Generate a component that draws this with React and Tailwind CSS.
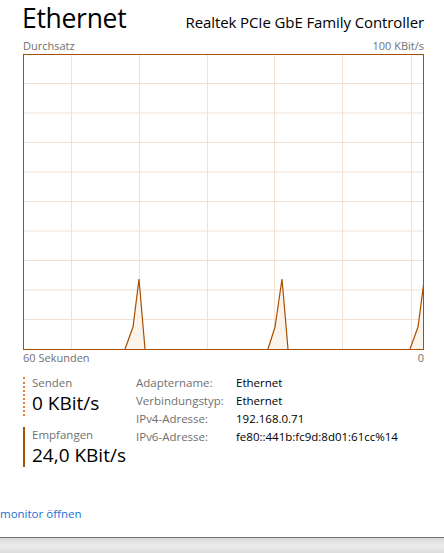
import React from 'react';

const vLines = [48, 116, 184, 251, 319, 388];
const hLines = [29.5, 59, 88.5, 118, 147.5, 177, 206.5, 236, 265.5];

const peaks = [
  '102,295 110,273 116,225 122,295',
  '245,295 252,273 259,225 265,295',
  '387,295 395,273 401,227 401,295',
];

function ThroughputChart() {
  return (
    <svg width="401" height="296" viewBox="0 0 401 296" className="block">
      <rect x="0" y="0" width="401" height="296" fill="#ffffff" />
      {vLines.map(x => (
        <line key={x} x1={x + 0.5} y1="0" x2={x + 0.5} y2="296" stroke="#f1e2d4" strokeWidth="1" />
      ))}
      {hLines.map(y => (
        <line key={y} x1="0" y1={y} x2="401" y2={y} stroke="#f1e2d4" strokeWidth="1" />
      ))}
      {peaks.map(p => (
        <polygon key={p} points={p} fill="#fcf3eb" stroke="none" />
      ))}
      {peaks.map(p => (
        <polyline key={p} points={p.split(' ').slice(0, 4).join(' ')} fill="none" stroke="#a74f01" strokeWidth="1.2" />
      ))}
      <rect x="0.5" y="0.5" width="400" height="295" fill="none" stroke="#a74f01" strokeWidth="1" />
    </svg>
  );
}

const details = [
  ['Adaptername:', 'Ethernet'],
  ['Verbindungstyp:', 'Ethernet'],
  ['IPv4-Adresse:', '192.168.0.71'],
  ['IPv6-Adresse:', 'fe80::441b:fc9d:8d01:61cc%14'],
];

export default function App() {
  return (
    <div
      className="w-[444px] h-[553px] bg-white relative overflow-hidden text-black"
      style={{ fontFamily: '"Open Sans", "Noto Sans", sans-serif' }}
    >
      <div className="pl-[22px] pr-[20px] h-[38px] flex items-baseline justify-between">
        <span className="text-[26.5px] leading-[36px] tracking-[-0.3px]">Ethernet</span>
        <span className="text-[15px] tracking-[-0.1px]">Realtek PCIe GbE Family Controller</span>
      </div>
      <div className="pl-[23px] pr-[20px] h-[16px] flex justify-between items-center text-[11px] text-[#707070]">
        <span>Durchsatz</span>
        <span>100 KBit/s</span>
      </div>
      <div className="pl-[23px]">
        <ThroughputChart />
      </div>
      <div className="pl-[23px] pr-[20px] h-[16px] flex justify-between items-center text-[11px] text-[#707070]">
        <span>60 Sekunden</span>
        <span>0</span>
      </div>

      <div className="pl-[23px] pt-[9px] flex">
        <div className="w-[113px] flex flex-col gap-[11px]">
          <div className="flex gap-[7px]">
            <div className="w-[2px] h-[39px] mt-[2px] border-l-2 border-dotted border-[#e07a3b]" />
            <div className="flex flex-col">
              <span className="text-[11.5px] leading-[15px] text-[#707070]">Senden</span>
              <span className="text-[19px] leading-[26px]">0 KBit/s</span>
            </div>
          </div>
          <div className="flex gap-[7px]">
            <div className="w-[2px] h-[40px] bg-[#a74f01]" />
            <div className="flex flex-col">
              <span className="text-[11.5px] leading-[15px] text-[#707070]">Empfangen</span>
              <span className="text-[19px] leading-[26px]">24,0 KBit/s</span>
            </div>
          </div>
        </div>
        <div className="-mt-[1px] flex flex-col">
          {details.map(([label, value]) => (
            <div key={label} className="flex h-[18px] items-center text-[11.5px]">
              <span className="w-[100px] text-[#707070]">{label}</span>
              <span>{value}</span>
            </div>
          ))}
        </div>
      </div>

      <div className="absolute left-0 top-[505px] text-[11.5px] text-[#1a6fd6]">monitor öffnen</div>

      <div className="absolute left-0 right-0 bottom-0 h-[16px] border-t border-[#707070] bg-gradient-to-b from-[#d8d8d8] via-[#ececec] to-[#dcdcdc]" />
    </div>
  );
}
